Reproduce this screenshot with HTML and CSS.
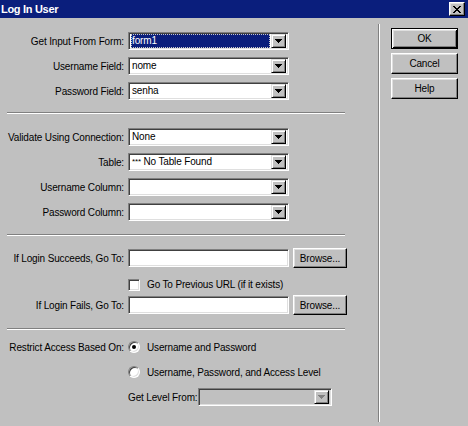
FILE: index.html
```html
<!DOCTYPE html>
<html>
<head>
<meta charset="utf-8">
<link rel="stylesheet" href="styles.css">
</head>
<body>
<div class="window">
  <div class="titlebar">
    <span class="title">Log In User</span>
    <span class="close"><svg width="8" height="7" viewBox="0 0 8 7"><path d="M0 0h2v1H0zM6 0h2v1H6zM1 1h2v1H1zM5 1h2v1H5zM2 2h4v1H2zM3 3h2v1H3zM2 4h4v1H2zM1 5h2v1H1zM5 5h2v1H5zM0 6h2v1H0zM6 6h2v1H6z"/></svg></span>
  </div>
  <div class="content">
    <div class="main">
      <div class="section">
        <div class="row"><span class="lbl">Get Input From Form:</span><div class="field"><span class="val focus">form1</span><span class="arrow"><svg width="7" height="4" viewBox="0 0 7 4"><path d="M0 0h7v1H6v1H5v1H4v1H3V3H2V2H1V1H0z"/></svg></span></div></div>
        <div class="row"><span class="lbl">Username Field:</span><div class="field"><span class="val">nome</span><span class="arrow"><svg width="7" height="4" viewBox="0 0 7 4"><path d="M0 0h7v1H6v1H5v1H4v1H3V3H2V2H1V1H0z"/></svg></span></div></div>
        <div class="row"><span class="lbl">Password Field:</span><div class="field"><span class="val">senha</span><span class="arrow"><svg width="7" height="4" viewBox="0 0 7 4"><path d="M0 0h7v1H6v1H5v1H4v1H3V3H2V2H1V1H0z"/></svg></span></div></div>
      </div>
      <div class="sep sep1"></div>
      <div class="section">
        <div class="row"><span class="lbl">Validate Using Connection:</span><div class="field"><span class="val">None</span><span class="arrow"><svg width="7" height="4" viewBox="0 0 7 4"><path d="M0 0h7v1H6v1H5v1H4v1H3V3H2V2H1V1H0z"/></svg></span></div></div>
        <div class="row"><span class="lbl">Table:</span><div class="field"><span class="val"><span class="stars">***</span> No Table Found</span><span class="arrow"><svg width="7" height="4" viewBox="0 0 7 4"><path d="M0 0h7v1H6v1H5v1H4v1H3V3H2V2H1V1H0z"/></svg></span></div></div>
        <div class="row"><span class="lbl">Username Column:</span><div class="field"><span class="val"></span><span class="arrow"><svg width="7" height="4" viewBox="0 0 7 4"><path d="M0 0h7v1H6v1H5v1H4v1H3V3H2V2H1V1H0z"/></svg></span></div></div>
        <div class="row"><span class="lbl">Password Column:</span><div class="field"><span class="val"></span><span class="arrow"><svg width="7" height="4" viewBox="0 0 7 4"><path d="M0 0h7v1H6v1H5v1H4v1H3V3H2V2H1V1H0z"/></svg></span></div></div>
      </div>
      <div class="sep sep2"></div>
      <div class="section">
        <div class="row row-btn"><span class="lbl">If Login Succeeds, Go To:</span><div class="field input"></div><span class="btn browse">Browse...</span></div>
        <div class="checkrow"><span class="check"></span><span>Go To Previous URL (if it exists)</span></div>
        <div class="row row-btn fails"><span class="lbl">If Login Fails, Go To:</span><div class="field input"></div><span class="btn browse">Browse...</span></div>
      </div>
      <div class="sep sep3"></div>
      <div class="section">
        <div class="row"><span class="lbl">Restrict Access Based On:</span><div class="opt"><span class="radio on"></span><span>Username and Password</span></div></div>
        <div class="row"><span></span><div class="opt"><span class="radio"></span><span>Username, Password, and Access Level</span></div></div>
        <div class="levelrow"><span class="lvl-lbl">Get Level From:</span><div class="field disabled"><span class="val"></span><span class="arrow"><svg width="7" height="4" viewBox="0 0 7 4"><path d="M0 0h7v1H6v1H5v1H4v1H3V3H2V2H1V1H0z"/></svg></span></div></div>
      </div>
    </div>
    <div class="vline"></div>
    <div class="side">
      <span class="btn default">OK</span>
      <span class="btn">Cancel</span>
      <span class="btn">Help</span>
    </div>
  </div>
</div>
</body>
</html>
```
FILE: styles.css
```css
* { box-sizing: border-box; }
html, body { margin: 0; padding: 0; }
body {
  width: 468px;
  height: 426px;
  overflow: hidden;
  background: #c0c0c0;
  font-family: "Liberation Sans", Arial, sans-serif;
  font-size: 10px;
  letter-spacing: -0.15px;
  color: #000;
}
.window {
  width: 468px;
  height: 426px;
  background: #c0c0c0;
  display: flex;
  flex-direction: column;
}
.titlebar {
  height: 18px;
  flex: none;
  background: #0a1e7c;
  display: flex;
  align-items: center;
  justify-content: space-between;
  padding: 0 3px 0 1px;
}
.title {
  color: #fff;
  font-weight: bold;
  font-size: 11px;
  letter-spacing: -0.3px;
}
.close {
  width: 16px;
  height: 14px;
  background: #c0c0c0;
  border: 1px solid;
  border-color: #fff #000 #000 #fff;
  box-shadow: inset -1px -1px #808080, inset 1px 1px #dfdfdf;
  display: flex;
  align-items: center;
  justify-content: center;
}
.close svg { display: block; }
.content { flex: 1; display: flex; }
.main { width: 378px; padding-top: 14px; flex: none; }
.vline {
  width: 2px;
  height: 398px;
  margin-top: 6px;
  border-left: 1px solid #808080;
  border-right: 1px solid #fff;
  flex: none;
}
.side {
  margin-left: 11px;
  padding-top: 10px;
  display: flex;
  flex-direction: column;
  gap: 4px;
}
.row {
  display: grid;
  grid-template-columns: 124px auto auto;
  justify-content: start;
  column-gap: 4px;
  align-items: center;
  height: 18px;
  margin-bottom: 7px;
}
.section > .row:last-child { margin-bottom: 0; }
.lbl { text-align: right; white-space: nowrap; }
.field {
  width: 161px;
  height: 18px;
  background: #fff;
  border: 1px solid;
  border-color: #808080 #fff #fff #808080;
  box-shadow: inset 1px 1px #404040, inset -1px -1px #dfdfdf;
  padding: 2px;
  display: flex;
  align-items: center;
}
.field .val {
  flex: 1;
  height: 14px;
  line-height: 14px;
  padding-left: 1px;
  white-space: nowrap;
  overflow: hidden;
}
.field .val.focus {
  background: #0a1e7c;
  color: #fff;
  outline: 1px dotted #c8c8c8;
  outline-offset: -1px;
  margin-right: 1px;
}
.stars { font-size: 8px; vertical-align: 1px; }
.arrow {
  width: 15px;
  height: 14px;
  flex: none;
  background: #c0c0c0;
  border: 1px solid;
  border-color: #dfdfdf #000 #000 #dfdfdf;
  box-shadow: inset 1px 1px #fff, inset -1px -1px #808080;
  display: flex;
  align-items: center;
  justify-content: center;
}
.arrow svg { display: block; }
.field.disabled { width: 134px; background: #c0c0c0; }
.field.disabled .arrow svg path { fill: #808080; }
.row-btn { height: 20px; }
.btn {
  display: flex;
  align-items: center;
  justify-content: center;
  width: 67px;
  height: 21px;
  background: #c0c0c0;
  border: 1px solid;
  border-color: #fff #000 #000 #fff;
  box-shadow: inset -1px -1px #808080, inset 1px 1px #dfdfdf;
}
.btn.default {
  border-color: #000;
  box-shadow: inset 1px 1px #fff, inset -1px -1px #000, inset 2px 2px #dfdfdf, inset -2px -2px #808080;
}
.btn.browse { width: 54px; height: 20px; }
.sep {
  width: 338px;
  height: 2px;
  margin-left: 7px;
  border-top: 1px solid #808080;
  border-bottom: 1px solid #fff;
}
.sep1 { margin-top: 12px; margin-bottom: 14px; }
.sep2 { margin-top: 13px; margin-bottom: 12px; }
.sep3 { margin-top: 13px; margin-bottom: 8px; }
.checkrow {
  display: flex;
  align-items: center;
  gap: 7px;
  padding-left: 128px;
  height: 13px;
  margin-top: 10px;
}
.check {
  width: 12px;
  height: 12px;
  background: #fff;
  border: 1px solid;
  border-color: #808080 #fff #fff #808080;
  box-shadow: inset 1px 1px #404040, inset -1px -1px #dfdfdf;
}
.row.fails { margin-top: 4px; }
.opt { display: flex; align-items: center; gap: 7px; }
.radio {
  width: 12px;
  height: 12px;
  border-radius: 50%;
  background: #fff;
  border: 1px solid;
  border-color: #808080 #fff #fff #808080;
  box-shadow: inset 1px 1px #404040, inset -1px -1px #dfdfdf;
  display: flex;
  align-items: center;
  justify-content: center;
}
.radio.on::after {
  content: "";
  width: 4px;
  height: 4px;
  border-radius: 50%;
  background: #000;
}
.levelrow {
  display: flex;
  align-items: center;
  padding-left: 128px;
  height: 18px;
  margin-top: 3px;
}
.lvl-lbl { width: 70px; white-space: nowrap; }
```
